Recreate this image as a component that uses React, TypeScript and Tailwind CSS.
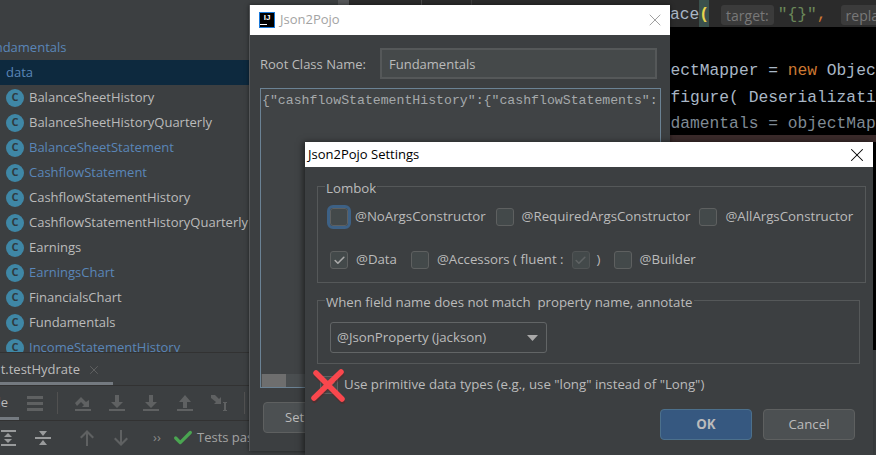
import { X, Check } from 'lucide-react'

const classes = [
  { name: 'BalanceSheetHistory' },
  { name: 'BalanceSheetHistoryQuarterly' },
  { name: 'BalanceSheetStatement', changed: true },
  { name: 'CashflowStatement', changed: true },
  { name: 'CashflowStatementHistory' },
  { name: 'CashflowStatementHistoryQuarterly' },
  { name: 'Earnings' },
  { name: 'EarningsChart', changed: true },
  { name: 'FinancialsChart' },
  { name: 'Fundamentals' },
  { name: 'IncomeStatementHistory', changed: true },
]

function TreeRow({ name, changed }: { name: string; changed?: boolean }) {
  return (
    <div className="flex h-[25px] shrink-0 items-center pl-[6px]">
      <span className="flex h-[18px] w-[18px] shrink-0 items-center justify-center rounded-full bg-[#3f87a6] text-[11px] font-bold text-[#2f3a40]">
        C
      </span>
      <span className={`ml-[5px] whitespace-nowrap ${changed ? 'text-[#5a86b8]' : 'text-[#bbbbbb]'}`}>{name}</span>
    </div>
  )
}

function Box({ checked, disabled, focused }: { checked?: boolean; disabled?: boolean; focused?: boolean }) {
  return (
    <span
      className={`flex h-[18px] w-[18px] shrink-0 items-center justify-center rounded-[3px] border border-[#5e6060] bg-[#43494a] ${
        focused ? 'outline-[3px] outline-[#3d6185]' : ''
      } ${disabled ? 'bg-[#3c3f41] border-[#515455]' : ''}`}
    >
      {checked && <Check size={13} strokeWidth={3} className={disabled ? 'text-[#5f6364]' : 'text-[#a9a9a9]'} />}
    </span>
  )
}

function Group({ title, className, children }: { title: string; className: string; children: React.ReactNode }) {
  return (
    <fieldset className={`border border-[#555859] px-[12px] ${className}`}>
      <legend className="-ml-[5px] whitespace-pre px-px pt-[4px] leading-[16px] text-[#bbbbbb]">{title}</legend>
      {children}
    </fieldset>
  )
}

function ToolIcon({ d, className = 'text-[#5f6162]' }: { d: string; className?: string }) {
  return (
    <svg width="18" height="18" viewBox="0 0 18 18" className={`shrink-0 ${className}`} fill="currentColor">
      <path d={d} />
    </svg>
  )
}

const lines = 'M1 2h16v3H1zM1 8h16v3H1zM1 14h16v3H1z'
const rerun = 'M1 15h16v2H1zM1 9l6-6 5 5 3-2v7H8l2-2-3-3-4 4z'
const down = 'M7 1h4v7h4l-6 6-6-6h4zM1 15h16v2H1z'
const up = 'M9 1l6 7h-4v6H7V8H3zM1 15h16v2H1z'

export default function App() {
  return (
    <div className="relative flex h-[455px] w-[876px] overflow-hidden bg-[#3c3f41] font-['Open_Sans','Noto_Sans',sans-serif] text-[13px]">
      {/* project tree and run panel */}
      <div className="flex w-[250px] shrink-0 flex-col overflow-hidden">
        <div className="flex h-[352px] shrink-0 flex-col overflow-hidden pt-[35px]">
          <div className="flex h-[25px] shrink-0 items-center whitespace-nowrap text-[#5a86b8]">
            <span className="-ml-[20px]">Fundamentals</span>
          </div>
          <div className="flex h-[25px] shrink-0 items-center bg-[#0d293e] pl-[6px] text-[#5a86b8]">data</div>
          {classes.map((c) => (
            <TreeRow key={c.name} name={c.name} changed={c.changed} />
          ))}
        </div>
        <div className="flex h-[34px] shrink-0 items-center border-y border-[#323232]">
          <span className="flex h-full w-[113px] items-center justify-end gap-[7px] border-b-[3px] border-[#747a80] pr-[12px] pt-[4px] text-[#bbbbbb]">
            <span className="whitespace-nowrap">t.testHydrate</span>
            <X size={14} strokeWidth={1.2} className="shrink-0 text-[#6e6e6e]" />
          </span>
        </div>
        <div className="flex h-[35px] shrink-0 items-center border-b border-[#323232]">
          <span className="flex h-full w-[19px] items-center justify-end border-b-[3px] border-[#747a80] pr-[11px] pt-[3px] text-[#bbbbbb]">
            le
          </span>
          <div className="ml-[7px] flex items-center gap-[16px]">
            <ToolIcon d={lines} />
            <span className="-ml-[3px] h-[22px] w-px bg-[#515151]" />
            <ToolIcon d={rerun} />
            <ToolIcon d={down} />
            <ToolIcon d={down} />
            <ToolIcon d={up} />
            <ToolIcon d="M1 1h4l4 4 2-2v7H4l2-2-5-4zM13 8h4v1h-1v7h1v1h-4v-1h1V9h-1z" />
            <span className="h-[22px] w-px bg-[#515151]" />
          </div>
        </div>
        <div className="flex h-[34px] shrink-0 items-center">
          <ToolIcon d="M1 1h15v2H1zM1 15h15v2H1zM8 4l4 4H4zM8 14l-4-4h8z" className="text-[#999b9c]" />
          <span className="ml-[16px]">
            <ToolIcon d="M1 8h16v2H1zM9 7L5 2h8zM9 11l4 5H5z" className="text-[#999b9c]" />
          </span>
          <span className="ml-[13px] h-[24px] w-px bg-[#515151]" />
          <span className="ml-[13px]">
            <ToolIcon d="M9 1l7 7-1.5 1.5L10 5v12H8V5L3.5 9.5 2 8z" />
          </span>
          <span className="ml-[16px]">
            <ToolIcon d="M9 17l7-7-1.5-1.5L10 13V1H8v12L3.5 8.5 2 10z" />
          </span>
          <span className="ml-[23px] w-[9px] shrink-0 text-[#8a8a8a]">››</span>
          <Check size={22} strokeWidth={3.5} className="ml-[10px] shrink-0 text-[#4aa551]" />
          <span className="ml-[3px] whitespace-nowrap text-[#a3a3a3]">Tests passed</span>
        </div>
      </div>

      {/* editor behind the dialogs */}
      <div className="flex min-w-0 flex-1 flex-col">
        <div className="flex h-[27px] shrink-0 items-center overflow-hidden whitespace-nowrap bg-[#2b2b2b] font-['Liberation_Mono',monospace] text-[16.3px] text-[#a9b7c6]">
          <span className="h-full w-[88px] shrink-0 bg-[#3c3f41]" />
          <span className="h-full w-[11px] shrink-0 bg-[#555759]" />
          <span className="h-full w-[73px] shrink-0 border-r border-[#4a4a4a]" />
          <span className="h-full w-[50px] shrink-0 border-r border-[#3d3d3d]" />
          <span className="h-full w-[198px] shrink-0" />
          <span className="pt-[3px]">ace</span>
          <span className="flex h-full items-center bg-[#3b514d] pt-[3px] font-bold text-[#e8d44d]">(</span>
          <span className="ml-[12px] mt-[3px] flex h-[20px] items-center rounded-[3px] bg-[#3b3b3b] px-[5px] font-['Open_Sans',sans-serif] text-[14px] text-[#787878]">
            target:
          </span>
          <span className="ml-[4px] pt-[3px] text-[#6a8759]">"{'{}'}"</span>
          <span className="pt-[3px] text-[#cc7832]">,</span>
          <span className="ml-[14px] mt-[3px] flex h-[20px] w-[40px] shrink-0 items-center rounded-l-[3px] bg-[#3b3b3b] pl-[5px] font-['Open_Sans',sans-serif] text-[14px] text-[#787878]">
            repla
          </span>
        </div>
        <div className="h-[108px] shrink-0 overflow-hidden whitespace-nowrap bg-black pl-[420.5px] pt-[31px] font-['Liberation_Mono',monospace] text-[16.3px] leading-[26.7px] text-[#a9b7c6]">
          <div>
            ectMapper = <span className="text-[#cc7832]">new</span> ObjectMapper();
          </div>
          <div>figure( DeserializationFeature</div>
          <div className="text-[#7f8a94]">damentals = objectMapper</div>
        </div>
        <div className="h-[7px] shrink-0 bg-[#3a2a2a]" />
        <div className="h-[208px] shrink-0 bg-black" />
      </div>

      {/* Json2Pojo window */}
      <div className="absolute left-[249px] top-[5px] flex h-[446px] w-[421px] flex-col border-l border-[#555759] bg-[#3c3f41] shadow-[0_0_4px_rgba(0,0,0,0.5)]">
        <div className="flex h-[30px] shrink-0 items-center justify-between bg-white pl-[9px] pr-[5px]">
          <div className="flex items-center">
            <span className="flex h-[16px] w-[16px] flex-col items-center border border-[#1a78d8] bg-black font-['Liberation_Sans',sans-serif] text-[8px] font-bold leading-[10px] text-white">
              IJ
              <span className="mt-px h-px w-[7px] self-start bg-white" />
            </span>
            <span className="ml-[5px] text-[#a3a3a3]">Json2Pojo</span>
          </div>
          <X size={20} strokeWidth={1} className="text-[#8e8e8e]" />
        </div>
        <div className="flex flex-col pl-[10px] pr-[10px] pt-[13px]">
          <div className="flex items-center">
            <span className="w-[120px] pt-[3px] text-[#bbbbbb]">Root Class Name:</span>
            <div className="flex h-[31px] w-[277px] items-center border-2 border-[#555859] bg-[#45494a] pl-[7px] pt-[3px] text-[#bbbbbb]">
              Fundamentals
            </div>
          </div>
          <div className="mt-[9px] flex h-[300px] w-[401px] flex-col justify-between border border-[#6b8294] bg-[#404345]">
            <div className="overflow-hidden whitespace-nowrap pl-px pt-[2px] font-['Liberation_Mono',monospace] text-[13.2px] text-[#a5a9ab]">
              {'{"cashflowStatementHistory":{"cashflowStatements":'}
            </div>
            <div className="h-[13px] bg-[#4a4e50]">
              <div className="ml-px h-[13px] w-[24px] bg-[#6e6e6e]" />
            </div>
          </div>
          <div className="ml-[3px] mt-[14px] flex h-[31px] w-[80px] items-center rounded-[4px] border border-[#5e6060] bg-[#4c5052] pl-[21px] text-[#bbbbbb]">
            Set
          </div>
        </div>
      </div>

      {/* Json2Pojo Settings window */}
      <div className="absolute left-[305px] top-[142px] flex h-[313px] w-[568px] flex-col bg-[#3c3f41] shadow-[-2px_0_6px_rgba(0,0,0,0.5)]">
        <div className="flex h-[25px] shrink-0 items-center justify-between bg-white pl-[3px] pr-[5px] text-[13px] text-black">
          <span>Json2Pojo Settings</span>
          <X size={22} strokeWidth={1.1} className="text-black" />
        </div>
        <div className="flex flex-col pl-[12px] pr-[13px] pt-[9px] text-[13.25px]">
          <Group title="Lombok" className="h-[107px]">
            <div className="-mt-px flex h-[43px] items-center gap-[6px] whitespace-nowrap pt-[1px] text-[#bbbbbb]">
              <Box focused />
              <span className="ml-[1px]">@NoArgsConstructor</span>
              <span className="ml-[4px]"><Box /></span>
              <span className="ml-[2px]">@RequiredArgsConstructor</span>
              <span className="ml-[3px]"><Box /></span>
              <span className="ml-[2px]">@AllArgsConstructor</span>
            </div>
            <div className="flex h-[43px] items-center gap-[6px] whitespace-nowrap pt-[1px] text-[#bbbbbb]">
              <Box checked />
              <span className="ml-[2px]">@Data</span>
              <span className="ml-[8px]"><Box /></span>
              <span className="ml-[2px]">@Accessors ( fluent :</span>
              <span className="ml-[2px]"><Box checked disabled /></span>
              <span className="ml-[1px]">)</span>
              <span className="ml-[7px]"><Box /></span>
              <span className="ml-[2px]">@Builder</span>
            </div>
          </Group>
          <Group title="When field name does not match  property name, annotate" className="mt-[7px] h-[74px]">
            <div className="mt-[12px] flex h-[31px] w-[217px] items-center justify-between rounded-[3px] border border-[#626566] pl-[6px] pr-[8px] pt-px text-[#bbbbbb]">
              <span>@JsonProperty (jackson)</span>
              <svg width="11" height="6" viewBox="0 0 11 6" className="text-[#a9a9a9]" fill="currentColor">
                <path d="M0 0h11L5.5 6z" />
              </svg>
            </div>
          </Group>
          <div className="relative mt-[9px] flex h-[24px] items-center pl-[3px] text-[#bbbbbb]">
            <Box checked />
            <span className="ml-[6px]">Use primitive data types (e.g., use "long" instead of "Long")</span>
            <svg width="38" height="36" viewBox="0 0 38 36" className="absolute -left-[8px] top-[-5px]" fill="none">
              <path d="M5 31L32 5M7 6l26 26" stroke="#5a2222" strokeWidth="5" strokeLinecap="round" opacity=".45" transform="translate(0.5 1.5)" />
              <path d="M5 30L32 4M7 5l26 26" stroke="#f9474d" strokeWidth="5.5" strokeLinecap="round" />
            </svg>
          </div>
          <div className="mt-[12px] flex justify-end gap-[11px] pr-[5px]">
            <div className="flex h-[31px] w-[92px] items-center justify-center rounded-[4px] border border-[#4c708c] bg-[#365880] font-bold text-[#bbbbbb]">
              OK
            </div>
            <div className="flex h-[31px] w-[92px] items-center justify-center rounded-[4px] border border-[#5e6060] bg-[#4c5052] text-[#bbbbbb]">
              Cancel
            </div>
          </div>
        </div>
      </div>
    </div>
  )
}
